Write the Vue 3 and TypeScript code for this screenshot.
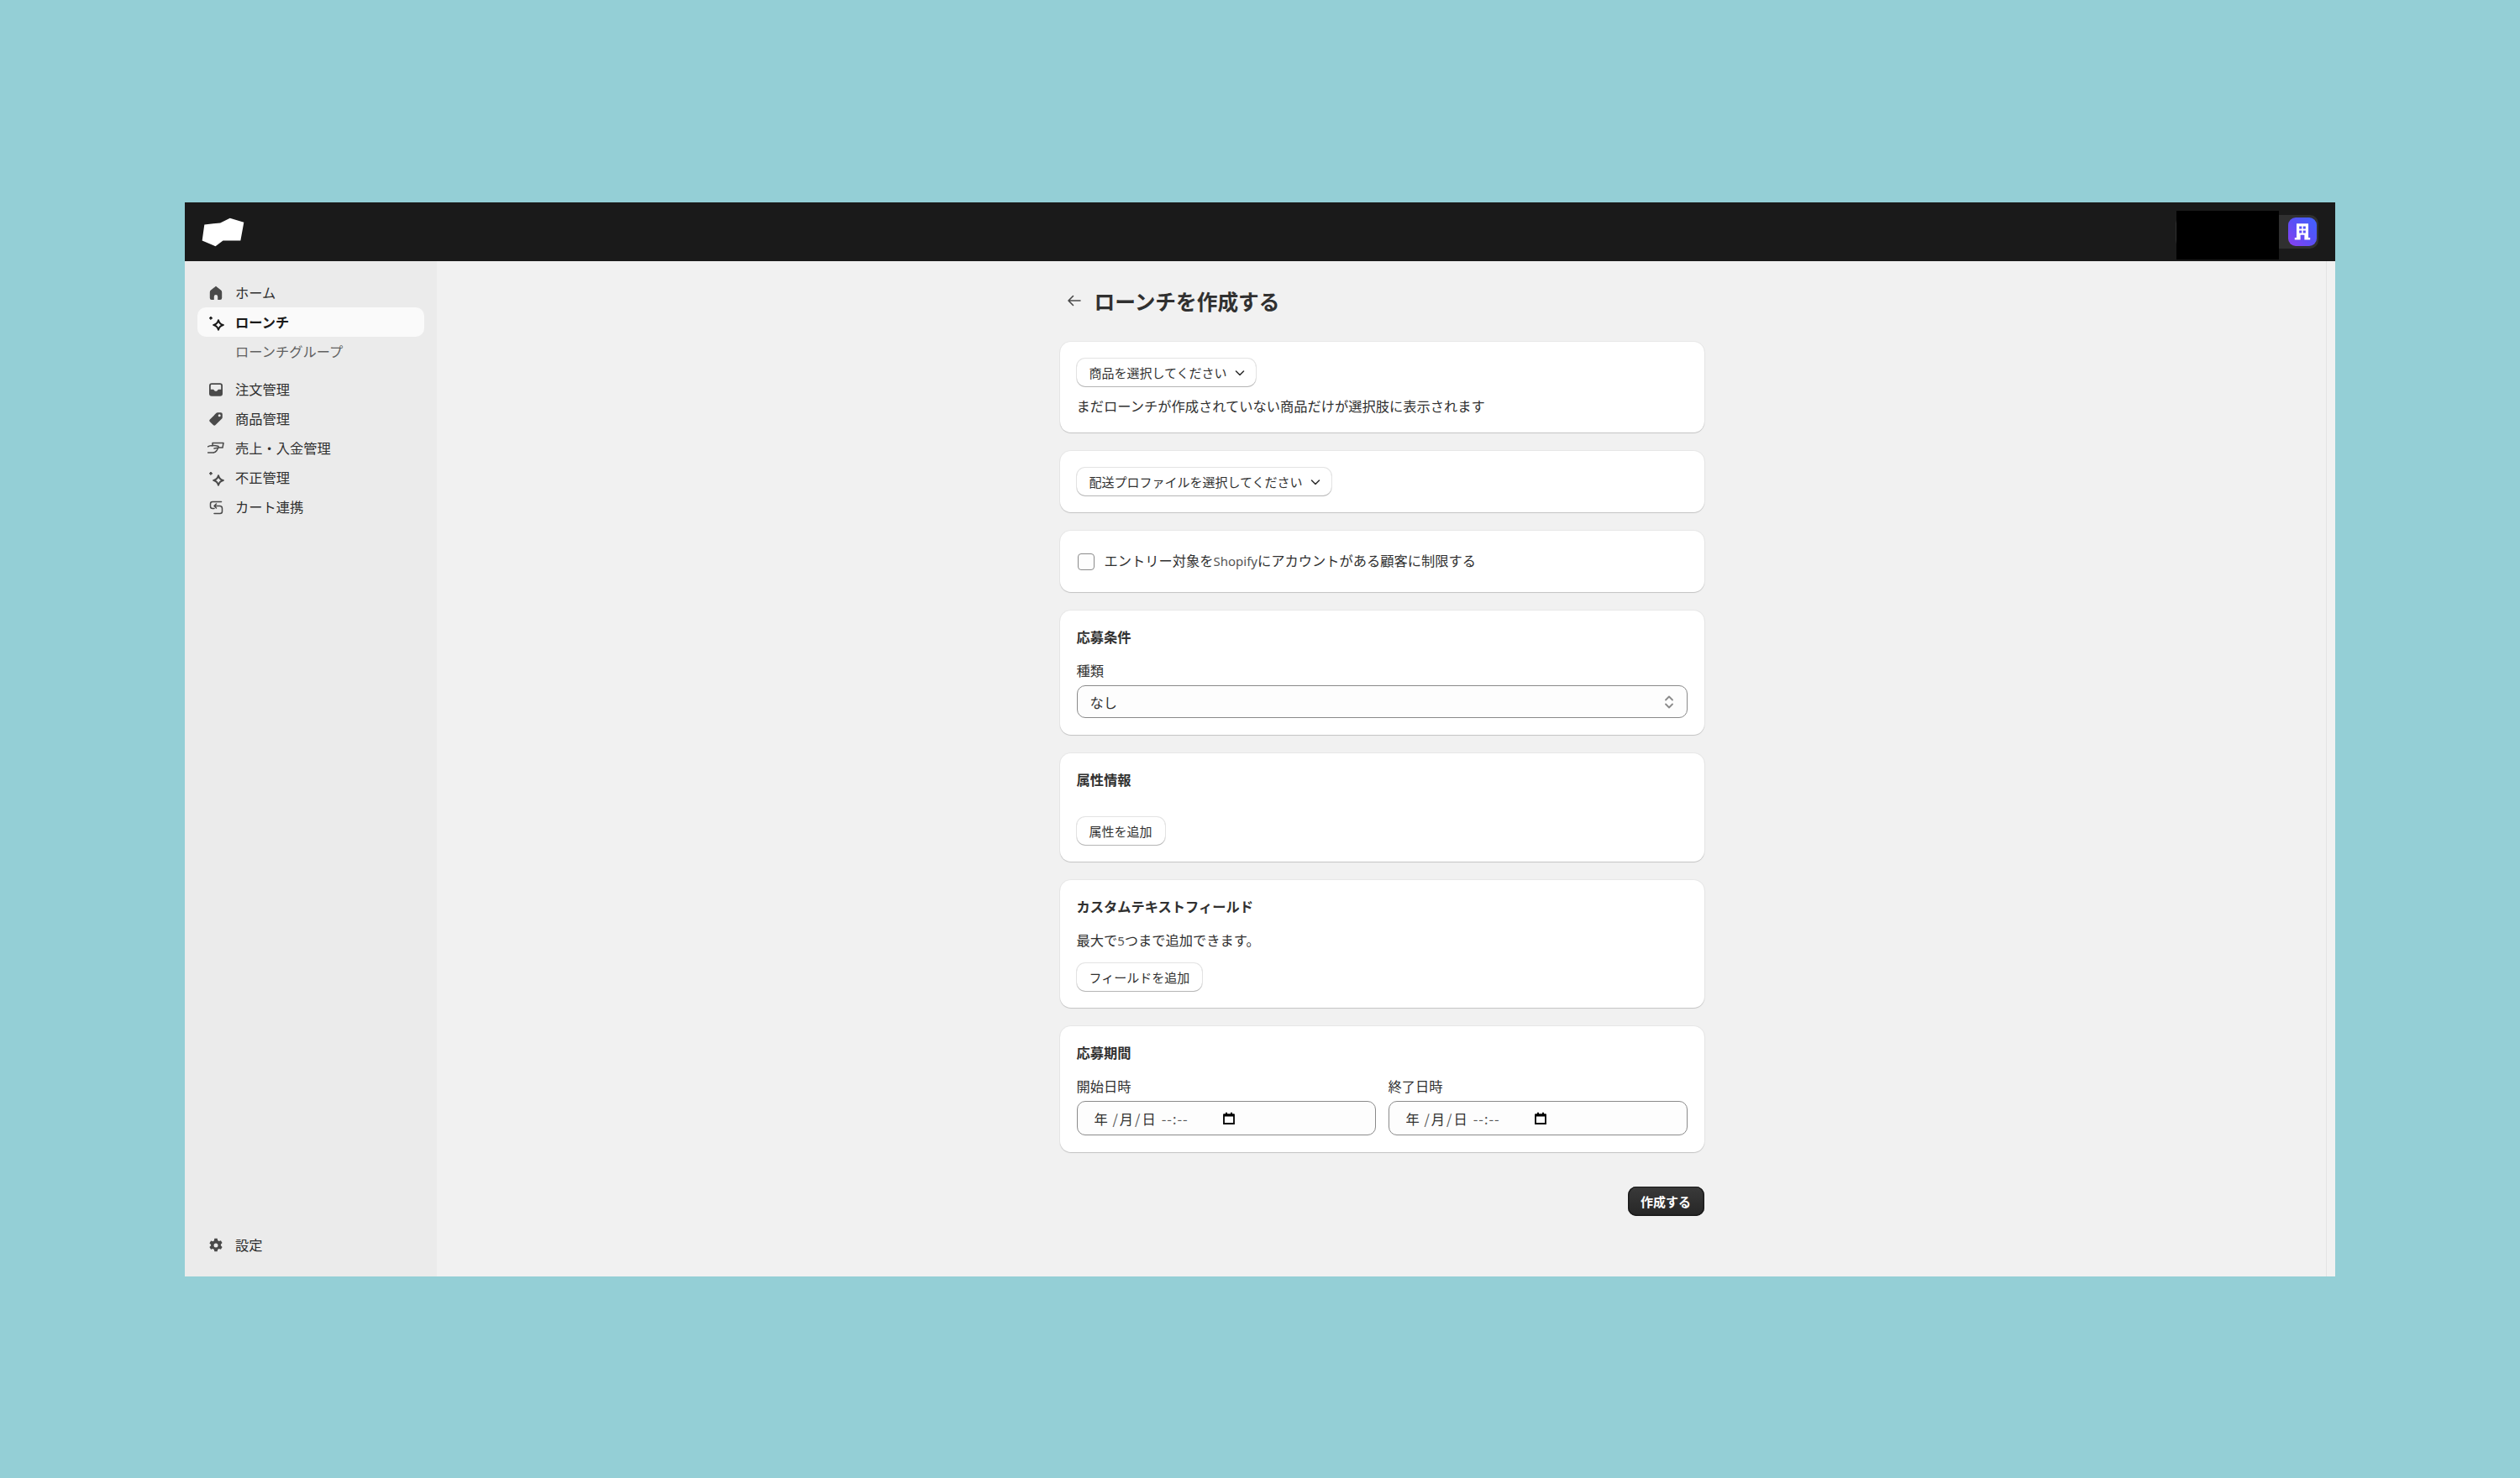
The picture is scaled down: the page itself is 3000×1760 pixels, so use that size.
<script setup lang="ts">
interface NavItem { label: string; icon: string; active?: boolean; sub?: boolean; gapAfter?: boolean }
const nav: NavItem[] = [
  { label: 'ホーム', icon: 'home' },
  { label: 'ローンチ', icon: 'spark', active: true },
  { label: 'ローンチグループ', icon: '', sub: true, gapAfter: true },
  { label: '注文管理', icon: 'inbox' },
  { label: '商品管理', icon: 'tag' },
  { label: '売上・入金管理', icon: 'cash' },
  { label: '不正管理', icon: 'spark' },
  { label: 'カート連携', icon: 'link' },
]
const dates = ['開始日時', '終了日時']
</script>

<template>
  <div class="page">
    <div class="frame">
      <header class="bar">
        <svg class="logo" viewBox="88 85 154 105"><polygon points="98,110 155,104 190,87 240,102 228,168 165,168 138,188 90,168" fill="#fff" /></svg>
        <div class="user">
          <div class="avatar">
            <svg viewBox="0 0 24 24" width="26" height="26" fill="#fff"><path d="M5.500 3h13v15.500h2v2.300h-6.300V15.500H9.800v5.300H3.500v-2.300h2zM8.500 6v2.800h2.800V6zm4.200 0v2.800h2.800V6zM8.500 10.600v2.800h2.800v-2.800zm4.200 0v2.800h2.800v-2.800z" fill-rule="evenodd"/></svg>
          </div>
          <div class="redact"></div>
        </div>
      </header>
      <div class="body">
        <aside class="side">
          <nav class="nav">
            <div v-for="n in nav" :key="n.label" class="row" :class="{ active: n.active, sub: n.sub, gap: n.gapAfter }">
              <span class="ico">
                <svg v-if="n.icon === 'home'" viewBox="0 0 20 20" fill="currentColor"><path d="M10 1.800 4 6.500A3 3 0 0 0 2.800 9v6.800A2.200 2.200 0 0 0 5 18h2.800v-3.800a2.200 2.200 0 0 1 4.400 0V18H15a2.200 2.200 0 0 0 2.200-2.200V9A3 3 0 0 0 16 6.500z"/></svg>
                <svg v-else-if="n.icon === 'spark'" viewBox="0 0 20 20" fill="none" stroke="currentColor"><path d="M13 7.200c.7 3 2.800 5.100 5.800 5.800-3 .7-5.100 2.800-5.800 5.800-.7-3-2.800-5.100-5.800-5.800 3-.7 5.100-2.800 5.800-5.800z" stroke-width="2" stroke-linejoin="round"/><path d="M4 3l1.800 1.800L4 6.600 2.200 4.800z" fill="currentColor" stroke-width=".8" stroke-linejoin="round"/></svg>
                <svg v-else-if="n.icon === 'inbox'" viewBox="0 0 20 20" fill="currentColor"><path fill-rule="evenodd" d="M5 2.200h10A3 3 0 0 1 18 5.200v9.600a3 3 0 0 1-3 3H5a3 3 0 0 1-3-3V5.200a3 3 0 0 1 3-3zM3.800 9.800h3c.5 0 .8.300 1 .7.300.8 1.200 1.300 2.200 1.300s1.900-.5 2.200-1.300c.2-.4.500-.7 1-.7h3V5.200A1.200 1.200 0 0 0 15 4H5a1.200 1.200 0 0 0-1.200 1.200z"/></svg>
                <svg v-else-if="n.icon === 'tag'" viewBox="0 0 20 20" fill="currentColor"><path fill-rule="evenodd" d="M12 2.200h3.800a2 2 0 0 1 2 2V8a2 2 0 0 1-.6 1.400l-7.600 7.700a2 2 0 0 1-2.800 0l-3.900-3.900a2 2 0 0 1 0-2.800l7.700-7.600A2 2 0 0 1 12 2.200zM14.200 7.300a1.500 1.500 0 1 0 0-3 1.500 1.500 0 0 0 0 3z"/></svg>
                <svg v-else-if="n.icon === 'cash'" viewBox="0 0 20 20" fill="none" stroke="currentColor" stroke-width="1.500" stroke-linecap="round" stroke-linejoin="round"><path d="M6 7V3.500h13L18 9h-5M0.500 7.800C2.500 6.500 4.500 6.200 7 6.500c2 .2 4 .5 5.500.8 1 .3.900 1.700-.2 1.900L8 10M0.500 15h6c2 0 3.500-1 4.500-2.500L13 9"/></svg>
                <svg v-else-if="n.icon === 'link'" viewBox="0 0 20 20" fill="none" stroke="currentColor" stroke-width="1.500" stroke-linecap="round" stroke-linejoin="round"><path d="M16.500 3.500H6A2.500 2.500 0 0 0 3.500 6v3A2.500 2.500 0 0 0 6 11.500h2M8 8.500h6.500a3 3 0 0 1 3 3v3.500a2.500 2.500 0 0 1-2.500 2.500H8M10.500 6 8 8.500l2.500 2.500"/></svg>
              </span>
              <span class="lbl">{{ n.label }}</span>
            </div>
          </nav>
          <div class="row settings">
            <span class="ico"><svg viewBox="0 0 20 20" fill="currentColor"><path fill-rule="evenodd" d="M8.300 1.800h3.400l.5 2.300 1.400.8 2.300-.7 1.700 2.900-1.700 1.600v1.600l1.700 1.600-1.700 2.900-2.300-.7-1.400.8-.5 2.300H8.300l-.5-2.300-1.400-.8-2.300.7-1.700-2.900 1.700-1.600V9.100L2.400 7.500l1.700-2.900 2.300.7 1.400-.8zM10 12.500a2.500 2.500 0 1 0 0-5 2.500 2.500 0 0 0 0 5z"/></svg></span>
            <span class="lbl">設定</span>
          </div>
        </aside>
        <main class="main">
          <div class="col">
            <div class="head">
              <svg class="back" viewBox="0 0 20 20" fill="none" stroke="#4a4a4a" stroke-width="1.600" stroke-linecap="round" stroke-linejoin="round"><path d="M17 10H3.500M8.500 4.500 3 10l5.500 5.500"/></svg>
              <h1>ローンチを作成する</h1>
            </div>

            <section class="card c1">
              <button class="btn">商品を選択してください<svg class="chev" viewBox="0 0 16 16" fill="none" stroke="#303030" stroke-width="1.600" stroke-linecap="round" stroke-linejoin="round"><path d="m3.500 6 4.500 4.500L12.500 6"/></svg></button>
              <p class="txt t1">まだローンチが作成されていない商品だけが選択肢に表示されます</p>
            </section>

            <section class="card">
              <button class="btn">配送プロファイルを選択してください<svg class="chev" viewBox="0 0 16 16" fill="none" stroke="#303030" stroke-width="1.600" stroke-linecap="round" stroke-linejoin="round"><path d="m3.500 6 4.500 4.500L12.500 6"/></svg></button>
            </section>

            <section class="card check">
              <span class="box"></span>
              <span class="txt up">エントリー対象を<span class="lat">Shopify</span>にアカウントがある顧客に制限する</span>
            </section>

            <section class="card">
              <h2>応募条件</h2>
              <label class="label">種類</label>
              <div class="field sel">
                <span>なし</span>
                <svg viewBox="0 0 16 20" width="16" height="20" fill="none" stroke="#8a8a8a" stroke-width="1.800" stroke-linecap="round" stroke-linejoin="round"><path d="m4 7.500 4-4 4 4M4 12.500l4 4 4-4"/></svg>
              </div>
            </section>

            <section class="card c5">
              <h2>属性情報</h2>
              <button class="btn add">属性を追加</button>
            </section>

            <section class="card">
              <h2>カスタムテキストフィールド</h2>
              <p class="txt t6">最大で<span class="lat">5</span>つまで追加できます。</p>
              <button class="btn">フィールドを追加</button>
            </section>

            <section class="card">
              <h2>応募期間</h2>
              <div class="dates">
                <div v-for="d in dates" :key="d" class="date">
                  <label class="label">{{ d }}</label>
                  <div class="field dt">
                    <span class="dv"><i>年</i>&nbsp;<b>/</b><i>月</i><b>/</b><i>日</i><em>--:--</em></span>
                    <svg viewBox="0 0 16 16" width="16" height="16" fill="none"><path d="M2 3.500h12v10.500H2z" stroke="#000" stroke-width="1.800"/><path d="M2 2.500h12v3H2zM4 .8h2v2H4zM10 .8h2v2h-2z" fill="#000"/></svg>
                  </div>
                </div>
              </div>
            </section>

            <div class="foot"><button class="primary">作成する</button></div>
          </div>
        </main>
        <div class="scroll"></div>
      </div>
    </div>
  </div>
</template>

<style>
html, body { margin: 0; background: #94cfd6; }
</style>

<style scoped>
.page {
  width: 3000px; height: 1760px; box-sizing: border-box;
  padding: 241px 220px 240px;
  background: #94cfd6;
  font-family: "Noto Sans CJK JP", "Noto Sans", sans-serif;
  font-size: 16.25px; color: #303030;
}
.frame { height: 1279px; display: flex; flex-direction: column; overflow: hidden; }
.bar {
  height: 70px; flex: none; background: #1a1a1a;
  display: flex; align-items: center; justify-content: space-between;
  padding: 0 20px 0 20px;
}
.logo { width: 51px; height: 35px; }
.user {
  position: relative; height: 40px; width: 170px; box-sizing: border-box;
  background: #303030; border-radius: 10px;
  display: flex; align-items: center; justify-content: flex-end; padding-right: 2px;
}
.redact { position: absolute; left: 1px; top: -5px; width: 122px; height: 58px; background: #000; }
.avatar {
  width: 34px; height: 34px; border-radius: 9px;
  background: linear-gradient(45deg, #8a3ff0, #5a4ff5 50%, #3f63ff);
  display: flex; align-items: center; justify-content: center;
}
.body { flex: 1; display: flex; min-height: 0; }
.side {
  width: 300px; flex: none; background: #ebebeb; box-sizing: border-box;
  padding: 20px 15px 20px;
  display: flex; flex-direction: column; justify-content: space-between;
}
.nav { display: flex; flex-direction: column; }
.row {
  height: 35px; display: flex; align-items: center; border-radius: 10px;
  padding-left: 12px; box-sizing: border-box; color: #303030;
}
.row.active { background: #fafafa; font-weight: 600; color: #1a1a1a; }
.row.sub { color: #616161; }
.row.gap { margin-bottom: 10px; }
.lbl { line-height: 24px; margin-top: -2px; }
.ico { width: 20px; height: 20px; margin-right: 13px; flex: none; color: #4a4a4a; display: block; }
.active .ico { color: #1a1a1a; }
.ico svg { width: 20px; height: 20px; display: block; }
.main { flex: 1; background: #f1f1f1; display: flex; justify-content: center; }
.scroll { width: 10px; background: #f1f1f1; border-left: 1px solid #e3e3e3; }
.col { width: 767px; margin-left: 1px; }
.head { height: 96px; box-sizing: border-box; padding: 30px 0 0 7px; display: flex; align-items: flex-start; }
.back { width: 20px; height: 20px; margin: 7px 14px 0 0; flex: none; }
h1 { margin: 0; font-size: 24.7px; line-height: 34px; font-weight: 700; color: #303030; }
.card {
  background: #fff; border-radius: 13px; padding: 20px 20px 20px 20px; margin-bottom: 22px;
  box-shadow: 0 1px 0 rgba(0,0,0,.1), 0 0 0 1px rgba(0,0,0,.04), 0 1px 2px rgba(0,0,0,.06);
  box-sizing: border-box;
}
.btn {
  display: inline-flex; align-items: center; height: 33px; padding: 0 15px; box-sizing: border-box;
  background: #fff; border: 0; border-radius: 10px; color: #303030;
  font: inherit; font-size: 15px; line-height: 20px;
  box-shadow: 0 1px 0 #b5b5b5, 0 0 0 1px #e3e3e3;
}
.chev { width: 16px; height: 16px; margin: 0 -4px 0 7px; }
p { margin: 0; }
.txt { font-size: 16.25px; line-height: 20px; color: #303030; display: block; }
.lat { font-family: "Noto Sans", sans-serif; font-size: 15px; color: #555; }
.up { margin-top: -2px; }
.t1 { margin-top: 13px; margin-bottom: 2px; }
.check { display: flex; align-items: center; height: 73px; padding-top: 0; padding-bottom: 0; }
.box { width: 20px; height: 20px; box-sizing: border-box; border: 1px solid #8a8a8a; border-radius: 4px; background: #fdfdfd; margin: 0 12px 0 1px; }
h2 { margin: -1px 0 0; font-size: 16.25px; line-height: 24px; font-weight: 700; color: #303030; }
.label { display: block; line-height: 20px; margin-top: 18px; margin-bottom: 8px; color: #303030; }
.field {
  background: #fdfdfd; border: 1px solid #8a8a8a; border-radius: 10px; box-sizing: border-box;
  display: flex; align-items: center;
}
.sel { height: 39px; padding: 0 13px 0 15px; justify-content: space-between; }
.c5 .add { margin-top: 33px; display: flex; width: fit-content; }
.t6 { margin-top: 18px; margin-bottom: 17px; }
.dates { display: flex; gap: 15px; }
.date { flex: 1; }
.dt { height: 41px; padding-left: 20px; }
.dv { width: 152px; white-space: nowrap; display: flex; align-items: center; }
.dv i { font-style: normal; }
.dv b { font-weight: 400; margin: 0 2px; color: #555; }
.dv em { font-style: normal; margin-left: 7px; color: #555; letter-spacing: 1px; }
.foot { display: flex; justify-content: flex-end; margin-top: 41px; }
.primary {
  height: 35px; width: 91px; border: 0; border-radius: 10px; padding: 0;
  background: linear-gradient(#3a3a3a, #262626); color: #fff;
  font: inherit; font-size: 15px; font-weight: 700;
  box-shadow: inset 0 0 0 1.500px #1a1a1a, inset 0 2px 0 #555;
}
</style>
